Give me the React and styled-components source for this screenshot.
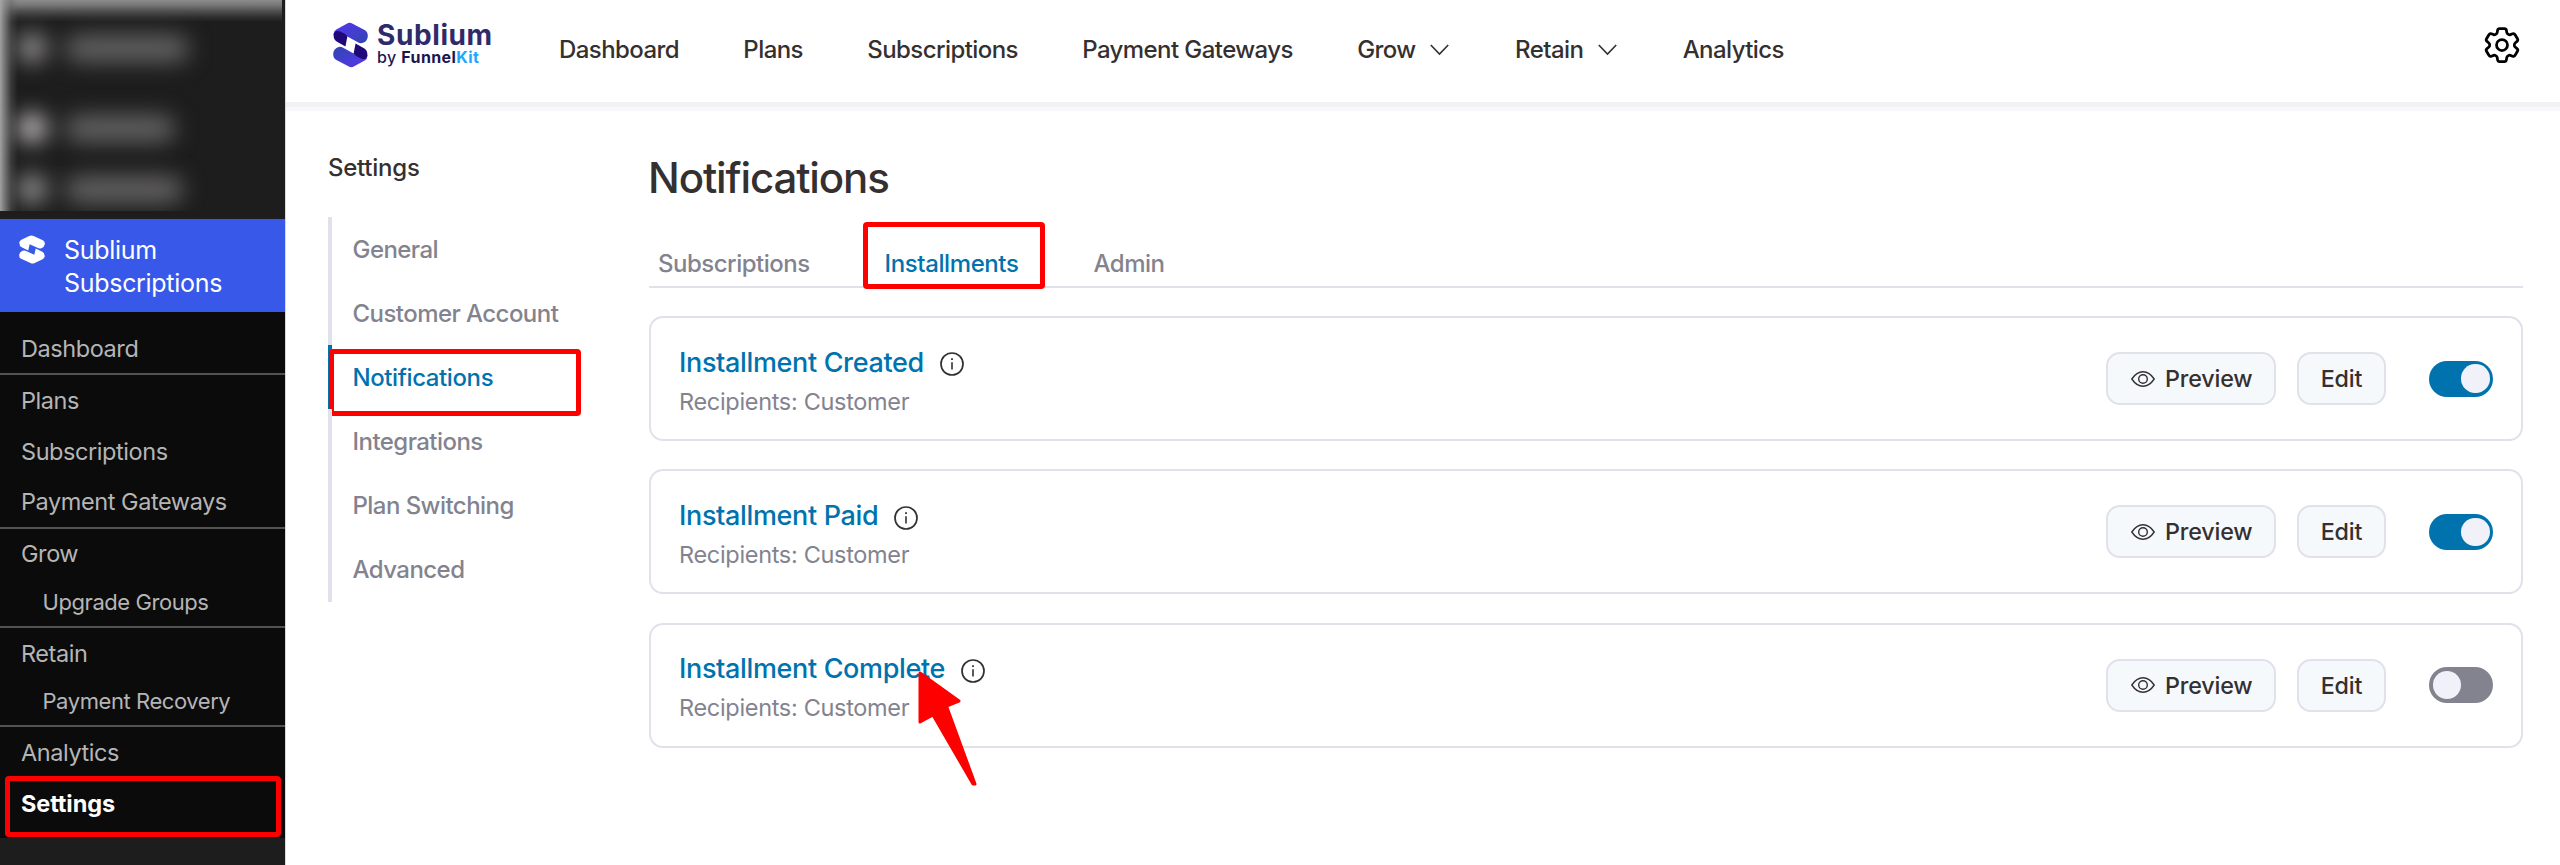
import React from 'react'
import styled, { createGlobalStyle, css } from 'styled-components'
import { HiOutlineCog6Tooth } from 'react-icons/hi2'

const adminMenu = [
  { label: 'Dashboard', height: 49, divider: true },
  { label: 'Plans', height: 51 },
  { label: 'Subscriptions', height: 50 },
  { label: 'Payment Gateways', height: 50.5, divider: true },
  { label: 'Grow', height: 50.5 },
  { label: 'Upgrade Groups', height: 47, child: true, divider: true },
  { label: 'Retain', height: 50 },
  { label: 'Payment Recovery', height: 47, child: true, divider: true },
  { label: 'Analytics', height: 51 },
  { label: 'Settings', height: 59, current: true },
]

const topNav = [
  { label: 'Dashboard' },
  { label: 'Plans' },
  { label: 'Subscriptions' },
  { label: 'Payment Gateways' },
  { label: 'Grow', dropdown: true },
  { label: 'Retain', dropdown: true },
  { label: 'Analytics' },
]

const settingsMenu = ['General', 'Customer Account', 'Notifications', 'Integrations', 'Plan Switching', 'Advanced']

const tabs = ['Subscriptions', 'Installments', 'Admin']

const notifications = [
  { title: 'Installment Created', recipients: 'Customer', enabled: true },
  { title: 'Installment Paid', recipients: 'Customer', enabled: true },
  { title: 'Installment Complete', recipients: 'Customer', enabled: false, pointer: true },
]

function LogoMark({ width, height, light = '#fff', dark = '#fff' }) {
  return (
    <svg width={width} height={height} viewBox="38 34 107 139" preserveAspectRatio="none">
      <defs>
        <linearGradient id={'mark' + width} x1="0" y1="0" x2="1" y2="1">
          <stop offset="0.2" stopColor={light === '#fff' ? '#fff' : '#5038e6'} />
          <stop offset="1" stopColor={light} />
        </linearGradient>
      </defs>
      {[0, 180].map((angle) => (
        <g key={angle} transform={`rotate(${angle} 91.5 103.5)`}>
          <path d="M40 74Q38 63 48 57L80 39Q89 33 98 39L136 59Q146 65 144 80Q142 92 130 97Q122 100 114 95L82 78Z" fill={`url(#mark${width})`} />
          <path d="M40 72Q44 56 60 63Q74 68 82 78L76 108L49 93Q39 87 40 72Z" fill={dark} />
        </g>
      ))}
    </svg>
  )
}

export default function App() {
  return (
    <>
      <GlobalStyle />
      <Page>
        <AdminSidebar>
          <BlurredMenu>
            <BlurredItem $top={24} $text={124} />
            <BlurredItem $top={32} $text={110} $bright />
            <BlurredItem $top={13} $text={118} />
          </BlurredMenu>
          <PluginItem>
            <LogoMark width={26} height={29} />
            <PluginName>
              Sublium
              <br />
              Subscriptions
            </PluginName>
          </PluginItem>
          <AdminMenu>
            {adminMenu.map((item) => (
              <AdminItem
                key={item.label}
                $height={item.height}
                $child={item.child}
                $divider={item.divider}
                $current={item.current}
              >
                {item.label}
              </AdminItem>
            ))}
          </AdminMenu>
        </AdminSidebar>

        <Main>
          <Header>
            <Logo>
              <LogoMark width={35} height={46} light="#3146ae" dark="#1f0878" />
              <LogoText>
                <LogoName>Sublium</LogoName>
                <LogoBy>
                  by <b>Funnel<span>Kit</span></b>
                </LogoBy>
              </LogoText>
            </Logo>
            <TopNav>
              {topNav.map((item) => (
                <TopLink key={item.label}>
                  {item.label}
                  {item.dropdown && (
                    <svg width="19" height="12" viewBox="0 0 19 12" fill="none" stroke="#353030" strokeWidth="1.6">
                      <path d="M0.8 1L9.5 10L18.2 1" />
                    </svg>
                  )}
                </TopLink>
              ))}
            </TopNav>
            <GearButton>
              <HiOutlineCog6Tooth size={44} />
            </GearButton>
          </Header>

          <Body>
            <SettingsNav>
              <SettingsTitle>Settings</SettingsTitle>
              <SettingsList>
                {settingsMenu.map((label) => (
                  <SettingsLink key={label} $active={label === 'Notifications'}>
                    {label}
                  </SettingsLink>
                ))}
              </SettingsList>
            </SettingsNav>

            <Content>
              <Heading>Notifications</Heading>
              <Tabs>
                {tabs.map((label) => (
                  <Tab key={label} $active={label === 'Installments'}>
                    {label}
                  </Tab>
                ))}
              </Tabs>
              <CardList>
                {notifications.map((item) => (
                  <NotificationCard key={item.title} item={item} />
                ))}
              </CardList>
            </Content>
          </Body>
        </Main>
      </Page>
    </>
  )
}

function NotificationCard({ item }) {
  return (
    <Card>
      <CardInfo>
        <CardTitle>
          {item.title}
          <svg width="24" height="24" viewBox="0 0 24 24" fill="none" stroke="#353030">
            <circle cx="12" cy="12" r="11" strokeWidth="1.7" />
            <path d="M12 10.2V17.6" strokeWidth="1.6" />
            <path d="M12 6.2V8" strokeWidth="1.8" />
          </svg>
        </CardTitle>
        <Recipients>Recipients: {item.recipients}</Recipients>
      </CardInfo>
      <Button $width={170}>
        <svg width="24" height="16" viewBox="0 0 24 16" fill="none" stroke="#353030" strokeWidth="1.4">
          <path d="M0.8 8C4 3.2 7.6 0.8 12 0.8S20 3.2 23.2 8C20 12.8 16.4 15.2 12 15.2S4 12.8 0.8 8Z" />
          <circle cx="12" cy="8" r="4.3" />
        </svg>
        Preview
      </Button>
      <Button $width={89}>Edit</Button>
      <Toggle $on={item.enabled} />
      {item.pointer && (
        <Pointer width="64" height="120" viewBox="0 0 64 120">
          <path d="M5 5L44 33L31.5 38L60 116H58L18 47L5 54Z" fill="#f00" stroke="#f00" strokeWidth="3" strokeLinejoin="round" />
        </Pointer>
      )}
    </Card>
  )
}

const GlobalStyle = createGlobalStyle`
*, *::before, *::after{
box-sizing:border-box;
}
body{
margin:0;
background:#fff;
font-family:Inter, sans-serif;
}
svg{
display:block;
flex-shrink:0;
}
`

// red annotation frame, sits over the highlighted element
const frame = css`
content:'';
position:absolute;
border:5px solid #f00;
border-radius:4px;
`

const Page = styled.div`
display:flex;
width:2560px;
height:865px;
overflow:hidden;
`

const AdminSidebar = styled.aside`
width:285px;
flex-shrink:0;
background:#1d1d1d;
`

const BlurredMenu = styled.div`
width:282px;
height:211px;
margin-bottom:8px;
padding-left:17px;
overflow:hidden;
background:
linear-gradient(90deg, rgba(168,168,168,0.95) 0, rgba(140,140,140,0.75) 5px, rgba(100,100,100,0.4) 11px, transparent 18px),
linear-gradient(180deg, #8c8c8c 0, #777 5px, #505050 11px, #303030 17px, #1d1d1d 22px);
`

const BlurredItem = styled.div`
display:flex;
align-items:center;
gap:18px;
height:48px;
margin-top:${(p) => p.$top}px;
filter:blur(11px);
&::before{
content:'';
width:30px;
height:30px;
border-radius:50%;
background:${(p) => (p.$bright ? '#c0bcbc' : '#918e8e')};
}
&::after{
content:'';
width:${(p) => p.$text}px;
height:27px;
border-radius:13px;
background:#636161;
}
`

const PluginItem = styled.div`
display:flex;
gap:19px;
height:93px;
padding:16px 0 0 19px;
background:#3858e9;
color:#fff;
`

const PluginName = styled.div`
margin-top:-1.5px;
font-size:25px;
line-height:33.3px;
letter-spacing:-0.3px;
`

const AdminMenu = styled.nav`
height:526px;
padding-top:12px;
background:#0b0b0b;
`

const AdminItem = styled.div`
position:relative;
display:flex;
align-items:center;
height:${(p) => p.$height + (p.$divider ? 2 : 0)}px;
padding-left:${(p) => (p.$child ? 42.5 : 21)}px;
padding-bottom:${(p) => (p.$child ? 2 : 0)}px;
border-bottom:${(p) => (p.$divider ? '2px solid #505355' : '0')};
font-size:${(p) => (p.$child ? 22 : 23.5)}px;
font-weight:${(p) => (p.$current ? 700 : 400)};
letter-spacing:${(p) => (p.$current ? -0.1 : -0.43)}px;
color:${(p) => (p.$current ? '#fff' : '#b5b5b5')};
${(p) =>
    p.$current &&
    css`
padding-bottom:9px;
&::after{
${frame}
left:5px;
top:-2px;
width:276px;
height:61px;
}
`}
`

const Main = styled.main`
flex:1;
border-left:1px solid #d9d9d9;
`

const Header = styled.header`
display:flex;
height:107px;
padding:0 36px 0 47px;
border-bottom:5px solid #f2f2f2;
box-shadow:0 4px 0 #f6f8fb;
`

const Logo = styled.div`
display:flex;
align-items:center;
gap:9px;
width:226px;
height:89px;
`

const LogoText = styled.div`
padding-top:1px;
`

const LogoName = styled.div`
font-size:28px;
font-weight:700;
line-height:25px;
letter-spacing:0.6px;
color:#2f2b6b;
`

const LogoBy = styled.div`
font-size:16px;
font-weight:500;
line-height:19px;
letter-spacing:0.4px;
color:#1c1650;
b{
font-weight:700;
}
span{
color:#1ea5fc;
}
`

const TopNav = styled.nav`
display:flex;
align-items:center;
gap:64.4px;
height:99px;
`

const TopLink = styled.div`
display:flex;
align-items:center;
gap:14.5px;
font-size:24px;
font-weight:500;
letter-spacing:-0.58px;
color:#353030;
svg{
margin-right:1.5px;
}
`

const GearButton = styled.div`
display:flex;
align-items:center;
height:89px;
margin-left:auto;
color:#000;
`

const Body = styled.div`
display:flex;
padding:41px 37px 0 42px;
`

const SettingsNav = styled.nav`
width:321px;
flex-shrink:0;
`

const SettingsTitle = styled.div`
height:68.5px;
padding-top:4px;
font-size:24px;
font-weight:500;
line-height:32px;
letter-spacing:-0.25px;
color:#353030;
`

const SettingsList = styled.div`
width:252px;
`

const SettingsLink = styled.div`
position:relative;
height:64.2px;
padding-left:20.5px;
border-left:4px solid ${(p) => (p.$active ? '#0073ae' : '#e1e1ee')};
font-size:24px;
font-weight:500;
line-height:66px;
letter-spacing:-0.55px;
color:${(p) => (p.$active ? '#0073ae' : '#83838f')};
${(p) =>
    p.$active &&
    css`
letter-spacing:-0.4px;
&::after{
${frame}
left:-3px;
top:4px;
width:252px;
height:67px;
}
`}
`

const Content = styled.section`
flex:1;
`

const Heading = styled.h1`
margin:0 0 0 -1px;
padding-top:5px;
height:92px;
font-size:42px;
font-weight:500;
line-height:50px;
letter-spacing:-1.12px;
color:#353030;
`

const Tabs = styled.div`
display:flex;
gap:57px;
height:48px;
border-bottom:2px solid #e1e1ec;
`

const Tab = styled.div`
position:relative;
height:48px;
padding:0 9px;
font-size:24px;
font-weight:500;
line-height:47px;
letter-spacing:-0.5px;
color:${(p) => (p.$active ? '#0073ae' : '#83838f')};
${(p) =>
    p.$active &&
    css`
letter-spacing:-0.4px;
border-bottom:4px solid #0073ae;
&::after{
${frame}
left:-13px;
top:-18px;
width:182px;
height:67px;
}
`}
`

const CardList = styled.div`
display:flex;
flex-direction:column;
gap:28.3px;
padding-top:28px;
`

const Card = styled.article`
position:relative;
display:flex;
align-items:center;
height:125px;
padding:0 28px;
border:2px solid #e1e1ec;
border-radius:14px;
`

const CardInfo = styled.div`
flex:1;
padding-top:7.5px;
`

const CardTitle = styled.div`
display:flex;
align-items:center;
gap:16px;
font-size:27px;
font-weight:500;
line-height:39px;
letter-spacing:-0.35px;
color:#0073ae;
svg{
margin-top:4px;
}
`

const Recipients = styled.div`
font-size:23.5px;
line-height:40px;
letter-spacing:-0.32px;
color:#83838f;
`

const Button = styled.div`
display:flex;
align-items:center;
justify-content:center;
gap:9.5px;
width:${(p) => p.$width}px;
height:53px;
margin-right:21px;
border:2px solid #e1e1ec;
border-radius:14px;
background:#f6f9fc;
font-size:23.3px;
font-weight:500;
letter-spacing:-0.15px;
color:#353030;
svg{
margin-left:2px;
}
`

const Toggle = styled.div`
display:flex;
align-items:center;
justify-content:${(p) => (p.$on ? 'flex-end' : 'flex-start')};
width:64px;
height:36px;
margin-left:22px;
padding:0 3.5px;
border-radius:18px;
background:${(p) => (p.$on ? '#0073ae' : '#83838f')};
&::before{
content:'';
width:28.5px;
height:28.5px;
border-radius:50%;
background:#f1f2f9;
}
`

const Pointer = styled.svg`
position:absolute;
left:264px;
top:43px;
z-index:1;
`
